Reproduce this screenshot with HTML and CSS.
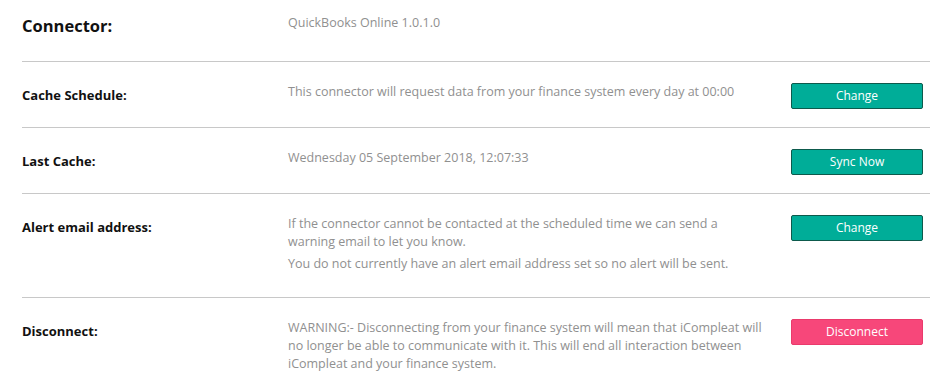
FILE: index.html
```html
<!DOCTYPE html>
<html>
<head>
<meta charset="utf-8">
<link rel="stylesheet" href="styles.css">
</head>
<body>
<div class="settings">
  <div class="row row-head">
    <div class="label label-big">Connector:</div>
    <div class="value"><p>QuickBooks Online 1.0.1.0</p></div>
    <div class="action"></div>
  </div>
  <div class="row">
    <div class="label">Cache Schedule:</div>
    <div class="value"><p>This connector will request data from your finance system every day at 00:00</p></div>
    <div class="action"><button class="btn">Change</button></div>
  </div>
  <div class="row">
    <div class="label">Last Cache:</div>
    <div class="value"><p>Wednesday 05 September 2018, 12:07:33</p></div>
    <div class="action"><button class="btn">Sync Now</button></div>
  </div>
  <div class="row">
    <div class="label">Alert email address:</div>
    <div class="value">
      <p>If the connector cannot be contacted at the scheduled time we can send a warning email to let you know.</p>
      <p>You do not currently have an alert email address set so no alert will be sent.</p>
    </div>
    <div class="action"><button class="btn">Change</button></div>
  </div>
  <div class="row">
    <div class="label">Disconnect:</div>
    <div class="value">
      <p>WARNING:- Disconnecting from your finance system will mean that iCompleat will no longer be able to communicate with it. This will end all interaction between iCompleat and your finance system.</p>
    </div>
    <div class="action"><button class="btn btn-danger">Disconnect</button></div>
  </div>
</div>
</body>
</html>
```

FILE: styles.css
```css
html, body {
  margin: 0;
  padding: 0;
  background: #ffffff;
}

body {
  font-family: "Open Sans", "Liberation Sans", sans-serif;
}

.settings {
  margin-left: 22px;
  width: 908px;
}

.row {
  display: flex;
  align-items: flex-start;
  padding: 21px 7px 18px 0;
  border-top: 1px solid #c8c8c8;
}

.row-head {
  border-top: none;
  padding: 14px 7px 23px 0;
}

.label {
  width: 266px;
  flex: none;
  font-size: 13px;
  font-weight: 700;
  line-height: 18px;
  margin-top: 3px;
  color: #111111;
}

.label-big {
  font-size: 16.5px;
  line-height: 24px;
  margin-top: 0;
}

.value {
  width: 475px;
  flex: none;
  font-size: 12.5px;
  line-height: 18px;
  color: #909090;
  padding-bottom: 2px;
}

.value p {
  margin: 0 0 4px 0;
}

.action {
  margin-left: auto;
  width: 132px;
  flex: none;
}

.btn {
  display: block;
  width: 132px;
  height: 26px;
  padding: 0;
  border: 1px solid #0d5a4c;
  border-radius: 2px;
  background: #00ad98;
  color: #ffffff;
  font-family: "Open Sans", "Liberation Sans", sans-serif;
  font-size: 12px;
  line-height: 24px;
  text-align: center;
}

.btn-danger {
  background: #f7477a;
  border-color: #ea3a6c;
}
```
